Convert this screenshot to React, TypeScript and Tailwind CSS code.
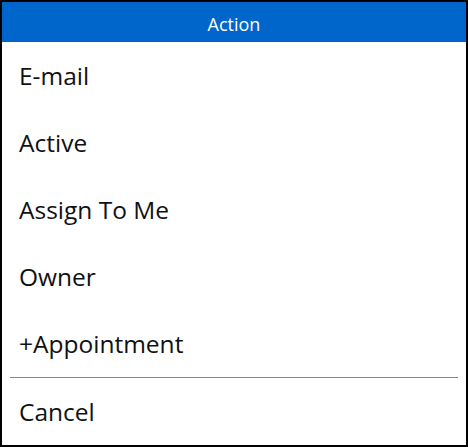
const items = ["E-mail", "Active", "Assign To Me", "Owner", "+Appointment"];

export default function App() {
  return (
    <div className="w-[468px] h-[447px] bg-white border-2 border-black flex flex-col font-['Open_Sans',sans-serif] text-[#111111]">
      {/* Header */}
      <div className="h-10 bg-[#0066cc] flex items-center justify-center pt-[5px] text-white text-[18px]">
        Action
      </div>

      {/* Options */}
      {items.map((label) => (
        <div key={label} className="h-[67px] flex items-center pl-[17px] pt-[2px] text-[24.5px]">
          {label}
        </div>
      ))}

      <div className="mx-2 h-px bg-[#888888]" />

      <div className="h-[67px] flex items-center pl-[17px] pt-[2px] text-[24.5px]">Cancel</div>
    </div>
  );
}
